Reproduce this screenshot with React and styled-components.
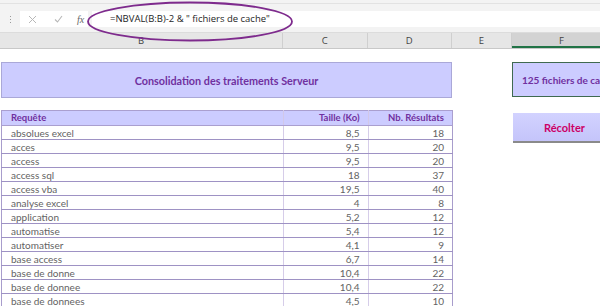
import React from "react";
import styled, { createGlobalStyle } from "styled-components";

const GlobalStyle = createGlobalStyle`
  html, body {
    margin: 0;
    padding: 0;
    background: #ffffff;
  }
  body {
    width: 600px;
    height: 306px;
    overflow: hidden;
    font-family: Lato, "Open Sans", sans-serif;
  }
`;

const ROWS = [
  ["absolues excel", "8,5", "18"],
  ["acces", "9,5", "20"],
  ["access", "9,5", "20"],
  ["access sql", "18", "37"],
  ["access vba", "19,5", "40"],
  ["analyse excel", "4", "8"],
  ["application", "5,2", "12"],
  ["automatise", "5,4", "12"],
  ["automatiser", "4,1", "9"],
  ["base access", "6,7", "14"],
  ["base de donne", "10,4", "22"],
  ["base de donnee", "10,4", "22"],
  ["base de donnees", "4,5", "10"],
];

const COLUMNS = [
  { name: "B", width: 283 },
  { name: "C", width: 84.5 },
  { name: "D", width: 84.5 },
  { name: "E", width: 60 },
  { name: "F", width: 100, selected: true },
];

const Window = styled.div`
  position: relative;
  width: 600px;
  height: 306px;
  overflow: hidden;
`;

const Ribbon = styled.div`
  height: 3px;
  background: #f3f3f3;
  border-bottom: 1px solid #e2e2e2;
`;

const FormulaBar = styled.div`
  height: 29px;
  background: #f3f3f3;
  display: flex;
  align-items: flex-start;
  padding-top: 7px;
  box-sizing: border-box;
  border-bottom: 1px solid #dcdcdc;
`;

const Handle = styled.div`
  width: 20px;
  height: 16px;
  display: flex;
  flex-direction: column;
  align-items: center;
  justify-content: center;
  gap: 2px;

  span {
    width: 1px;
    height: 1px;
    background: #9a9a9a;
  }
`;

const ActionBox = styled.div`
  width: 68px;
  height: 16px;
  background: #ffffff;
  display: flex;
  align-items: center;
  box-sizing: border-box;
  padding-left: 8px;
  gap: 17px;
`;

const Fx = styled.span`
  font-family: "Liberation Serif", serif;
  font-style: italic;
  font-size: 10px;
  color: #666666;
  margin-left: -3px;
`;

const FormulaInput = styled.div`
  flex: 1;
  height: 16px;
  margin-left: 4px;
  background: #ffffff;
  font-family: "Open Sans", sans-serif;
  font-size: 9.5px;
  line-height: 16px;
  color: #1e1e1e;
  padding-left: 18px;
  white-space: nowrap;
`;

const HeaderRow = styled.div`
  display: flex;
  height: 15px;
  background: #e6e6e6;
  border-bottom: 1px solid #c8c8c8;
`;

const ColHeader = styled.div`
  flex: 0 0 ${(p) => p.$w}px;
  box-sizing: border-box;
  border-right: 1px solid #cfcfcf;
  text-align: center;
  font-family: "Open Sans", sans-serif;
  font-size: 9.5px;
  line-height: 15px;
  color: #444444;
  background: ${(p) => (p.$selected ? "#d3d3d3" : "transparent")};
  box-shadow: ${(p) => (p.$selected ? "inset 0 -2px 0 #217346" : "none")};
`;

const Sheet = styled.div`
  display: flex;
  padding-top: 13px;
`;

const LeftBlock = styled.div`
  width: 451px;
  margin-left: 1px;
  display: flex;
  flex-direction: column;
  gap: 12px;
`;

const TitleBox = styled.div`
  height: 36px;
  box-sizing: border-box;
  background: #ccccff;
  border: 1px solid #aaa8d8;
  display: flex;
  align-items: center;
  justify-content: center;
  font-weight: 700;
  font-size: 10.8px;
  color: #7030a0;
`;

const DataTable = styled.table`
  width: 451px;
  border-collapse: collapse;
  table-layout: fixed;
  font-size: 10px;
`;

const HeadRow = styled.tr`
  height: 15px;
`;

const BodyRow = styled.tr`
  height: 14px;
`;

const Th = styled.th`
  padding: 0 8px 0 ${(p) => (p.$right ? "0" : "9px")};
  line-height: 12px;
  background: #ccccff;
  color: #7030a0;
  font-weight: 700;
  font-size: 9.5px;
  text-align: ${(p) => (p.$right ? "right" : "left")};
  border: 1px solid #aa9fcf;
  border-right-color: ${(p) => (p.$last ? "#aa9fcf" : "#d2c8e8")};
`;

const Td = styled.td`
  padding: 0 ${(p) => (p.$right ? "8px" : "0")} 0 ${(p) => (p.$right ? "0" : "9px")};
  line-height: 12px;
  color: #636363;
  text-align: ${(p) => (p.$right ? "right" : "left")};
  border-bottom: 1px solid #9e92c4;
  border-left: 1px solid ${(p) => (p.$first ? "#a89dcc" : "#d6cde9")};
  border-right: 1px solid ${(p) => (p.$last ? "#a89dcc" : "#d6cde9")};
  white-space: nowrap;
`;

const RightBlock = styled.div`
  margin-left: 60px;
  display: flex;
  flex-direction: column;
  gap: 16px;
`;

const CacheBox = styled.div`
  width: 110px;
  height: 35px;
  box-sizing: border-box;
  background: #ccccff;
  border: 1.5px solid #3f6a50;
  display: flex;
  align-items: center;
  padding-left: 9px;
  font-weight: 700;
  font-size: 10px;
  color: #7030a0;
  white-space: nowrap;
`;

const HarvestButton = styled.button`
  width: 108px;
  height: 30px;
  margin-left: 1px;
  border: none;
  border-bottom: 2px solid #8a8a8a;
  background: linear-gradient(#d2d2ff, #c4c4fa);
  font-family: Lato, sans-serif;
  font-weight: 700;
  font-size: 11px;
  color: #cc0066;
  text-align: left;
  padding: 0 0 0 31px;
`;

const Annotation = styled.svg`
  position: absolute;
  left: 86px;
  top: 1px;
`;

const CrossIcon = () => (
  <svg width="9" height="9" viewBox="0 0 9 9">
    <path d="M1 1 L8 8 M8 1 L1 8" stroke="#b8b8b8" strokeWidth="1" fill="none" />
  </svg>
);

const CheckIcon = () => (
  <svg width="9" height="8" viewBox="0 0 9 8">
    <path d="M1 4.5 L3.5 7 L8 1" stroke="#b8b8b8" strokeWidth="1.1" fill="none" />
  </svg>
);

export default function App() {
  return (
    <Window>
      <GlobalStyle />
      <Ribbon />
      <FormulaBar>
        <Handle>
          <span />
          <span />
          <span />
        </Handle>
        <ActionBox>
          <CrossIcon />
          <CheckIcon />
          <Fx>fx</Fx>
        </ActionBox>
        <FormulaInput>=NBVAL(B:B)-2 &amp; " fichiers de cache"</FormulaInput>
      </FormulaBar>
      <HeaderRow>
        {COLUMNS.map((c) => (
          <ColHeader key={c.name} $w={c.width} $selected={c.selected}>
            {c.name}
          </ColHeader>
        ))}
      </HeaderRow>
      <Sheet>
        <LeftBlock>
          <TitleBox>Consolidation des traitements Serveur</TitleBox>
          <DataTable>
            <colgroup>
              <col style={{ width: 282 }} />
              <col style={{ width: 84.5 }} />
              <col style={{ width: 84.5 }} />
            </colgroup>
            <thead>
              <HeadRow>
                <Th>Requête</Th>
                <Th $right>Taille (Ko)</Th>
                <Th $right $last>
                  Nb. Résultats
                </Th>
              </HeadRow>
            </thead>
            <tbody>
              {ROWS.map(([name, size, count]) => (
                <BodyRow key={name}>
                  <Td $first>{name}</Td>
                  <Td $right>{size}</Td>
                  <Td $right $last>
                    {count}
                  </Td>
                </BodyRow>
              ))}
            </tbody>
          </DataTable>
        </LeftBlock>
        <RightBlock>
          <CacheBox>125 fichiers de cache</CacheBox>
          <HarvestButton>Récolter</HarvestButton>
        </RightBlock>
      </Sheet>
      <Annotation width="210" height="42" viewBox="0 0 210 42">
        <ellipse cx="104" cy="20.5" rx="102" ry="19" fill="none" stroke="#7e2b8d" strokeWidth="1.8" />
      </Annotation>
    </Window>
  );
}
